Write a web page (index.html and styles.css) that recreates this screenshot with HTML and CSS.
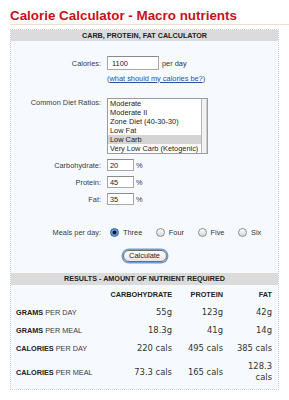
FILE: index.html
```html
<!DOCTYPE html>
<html lang="en">
  <head>
    <meta charset="UTF-8" />
    <title>Calorie Calculator - Macro nutrients</title>
    <link rel="stylesheet" href="styles.css">
  </head>
  <body>
    <h1 class="title">Calorie Calculator - Macro nutrients</h1>

    <div class="calc">
      <div class="band">CARB, PROTEIN, FAT CALCULATOR</div>

      <!-- Form input -->
      <div class="row row-cal">
        <span class="lbl">Calories:</span>
        <input class="txt txt-wide" type="text" value="1100">
        <span class="unit">per day</span>
      </div>
      <div class="row row-link">
        <span class="lbl"></span>
        <span class="paren">(<a href="#">what should my calories be?</a>)</span>
      </div>

      <div class="row row-diet">
        <span class="lbl">Common Diet Ratios:</span>
        <div class="list">
          <div class="opts">
            <div class="item">Moderate</div>
            <div class="item">Moderate II</div>
            <div class="item">Zone Diet (40-30-30)</div>
            <div class="item">Low Fat</div>
            <div class="item sel">Low Carb</div>
            <div class="item">Very Low Carb (Ketogenic)</div>
          </div>
          <div class="scroll"></div>
        </div>
      </div>

      <div class="row">
        <span class="lbl">Carbohydrate:</span>
        <input class="txt" type="text" value="20">
        <span class="pct">%</span>
      </div>
      <div class="row">
        <span class="lbl">Protein:</span>
        <input class="txt" type="text" value="45">
        <span class="pct">%</span>
      </div>
      <div class="row">
        <span class="lbl">Fat:</span>
        <input class="txt" type="text" value="35">
        <span class="pct">%</span>
      </div>

      <div class="row row-meals">
        <span class="lbl">Meals per day:</span>
        <div class="meals">
          <span class="meal"><span class="radio on"></span>Three</span>
          <span class="meal"><span class="radio"></span>Four</span>
          <span class="meal"><span class="radio"></span>Five</span>
          <span class="meal"><span class="radio"></span>Six</span>
        </div>
      </div>

      <div class="actions">
        <button class="btn" type="button">Calculate</button>
      </div>

      <!-- Hasil -->
      <div class="band band-results">RESULTS - AMOUNT OF NUTRIENT REQUIRED</div>
      <div class="results">
        <span></span>
        <span class="h">CARBOHYDRATE</span>
        <span class="h">PROTEIN</span>
        <span class="h fat">FAT</span>

        <span class="name"><b>GRAMS</b> PER DAY</span>
        <span class="val">55g</span>
        <span class="val">123g</span>
        <span class="val fat">42g</span>

        <span class="name"><b>GRAMS</b> PER MEAL</span>
        <span class="val">18.3g</span>
        <span class="val">41g</span>
        <span class="val fat">14g</span>

        <span class="name"><b>CALORIES</b> PER DAY</span>
        <span class="val">220 cals</span>
        <span class="val">495 cals</span>
        <span class="val fat">385 cals</span>

        <span class="name"><b>CALORIES</b> PER MEAL</span>
        <span class="val">73.3 cals</span>
        <span class="val">165 cals</span>
        <span class="val fat">128.3 cals</span>
      </div>
    </div>
  </body>
</html>
```

FILE: styles.css
```css
/* Layout halaman */
body {
  margin: 0;
  padding: 8px 0 0 10px;
  background: #fff;
  font-family: "Liberation Sans", Arial, sans-serif;
  color: #333;
}

.title {
  margin: 0;
  font-size: 13.4px;
  line-height: 16px;
  color: #c8101e;
  border-bottom: 1px solid #f1dcc9;
}

/* Kotak kalkulator */
.calc {
  width: 269px;
  box-sizing: border-box;
  margin-top: 4px;
  border: 1px dotted #c6ccd3;
  background: #f6faff;
}

.band {
  height: 11px;
  line-height: 11px;
  text-align: center;
  font-size: 7.2px;
  font-weight: bold;
  color: #222;
  background: #dbdbdb;
}

.band-results {
  height: 12px;
  line-height: 12px;
  margin-top: 10px;
}

/* Baris form */
.row {
  display: flex;
  align-items: center;
  height: 12px;
  margin-top: 5px;
  font-size: 7.4px;
}

.lbl {
  flex: none;
  width: 90px;
  margin-right: 6px;
  text-align: right;
  color: #3a3a3a;
}

.row-cal {
  margin-top: 15px;
  height: 14px;
}

.row-link {
  margin-top: 2px;
}

.row-diet {
  margin-top: 14px;
  height: 56px;
  align-items: flex-start;
}

.row-diet .lbl {
  line-height: 10px;
}

.row-meals {
  margin-top: 21px;
}

.txt {
  box-sizing: border-box;
  width: 27px;
  height: 12px;
  margin: 0;
  padding: 0 2px;
  border: 1px solid #a8a8a8;
  border-top-color: #8a8a8a;
  background: #fff;
  font: 7.4px "Liberation Sans", Arial, sans-serif;
  color: #222;
}

.txt-wide {
  width: 52px;
  height: 14px;
  padding-left: 4px;
}

.unit {
  margin-left: 3px;
}

.pct {
  margin-left: 2px;
}

.paren {
  color: #3b4f8c;
}

.paren a {
  color: #2b4fa8;
}

/* Daftar rasio diet */
.list {
  display: flex;
  box-sizing: border-box;
  width: 101px;
  height: 56px;
  border: 1px solid #9c9c9c;
  background: #fff;
}

.opts {
  flex: 1;
}

.item {
  height: 9px;
  line-height: 9px;
  padding-left: 2px;
  white-space: nowrap;
  color: #222;
}

.item.sel {
  background: #d4d4d4;
}

.scroll {
  width: 5px;
  border-left: 1px solid #b5b5b5;
  background: #f2f2f2;
  box-shadow: inset -1px 0 0 #d0d0d0;
}

/* Pilihan makan */
.meals {
  display: flex;
  align-items: center;
  margin-left: 3px;
  gap: 13.5px;
}

.meal {
  display: flex;
  align-items: center;
  color: #333;
}

.radio {
  box-sizing: border-box;
  width: 9px;
  height: 9px;
  margin-right: 4px;
  border: 1px solid #8d8d8d;
  border-radius: 50%;
  background: linear-gradient(#fff, #d6d6d6);
}

.radio.on {
  border-color: #2f5f9a;
  background: radial-gradient(circle, #1a1a1a 0 1.6px, #4f8ad6 2.2px, #a9cdf5 100%);
}

/* Tombol */
.actions {
  display: flex;
  justify-content: center;
  align-items: center;
  height: 14px;
  margin-top: 11px;
}

.btn {
  box-sizing: border-box;
  width: 44px;
  height: 12px;
  padding: 0;
  border: 1px solid #6e6e6e;
  border-radius: 7px;
  background: linear-gradient(#fff, #e4e4e4);
  box-shadow: 0 0 0 1.5px #6d9bd6;
  font: 7.4px "Liberation Sans", Arial, sans-serif;
  line-height: 10px;
  color: #222;
}

/* Tabel hasil */
.results {
  display: grid;
  grid-template-columns: 1fr 65px 51px 49px;
  row-gap: 7px;
  align-items: center;
  padding: 4px 6px 6px 5px;
  line-height: 11px;
}

.results .h {
  font-size: 7.3px;
  font-weight: bold;
  text-align: right;
  color: #222;
}

.name {
  font-size: 7.3px;
  color: #3a3a3a;
}

.name b {
  color: #222;
}

.val {
  font-family: "DejaVu Sans", Verdana, sans-serif;
  font-size: 8.4px;
  text-align: right;
  color: #333;
}

.fat {
  padding-left: 9px;
}
```
